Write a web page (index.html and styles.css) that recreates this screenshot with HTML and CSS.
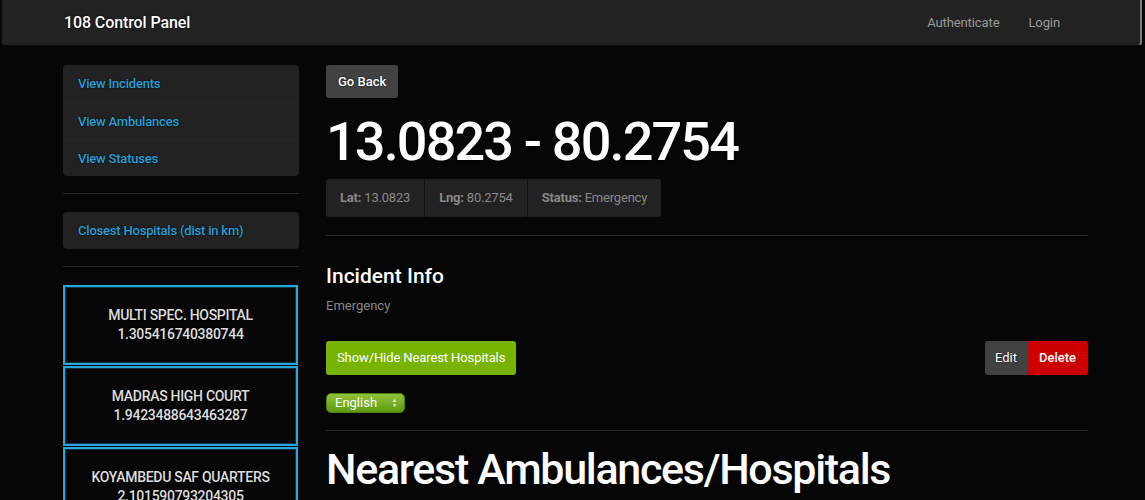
FILE: index.html
```html
<!DOCTYPE html>
<html>
<head>
<meta charset="utf-8">
<title>108 Control Panel</title>
<link rel="stylesheet" href="styles.css">
</head>
<body>
<nav class="navbar">
  <a class="brand" href="#">108 Control Panel</a>
  <div class="nav-links">
    <a href="#">Authenticate</a>
    <a href="#">Login</a>
  </div>
</nav>
<div class="page">
  <aside class="sidebar">
    <div class="list-group">
      <a class="list-item" href="#">View Incidents</a>
      <a class="list-item" href="#">View Ambulances</a>
      <a class="list-item" href="#">View Statuses</a>
    </div>
    <hr class="rule side-rule">
    <div class="list-group">
      <a class="list-item" href="#">Closest Hospitals (dist in km)</a>
    </div>
    <hr class="rule side-rule">
    <div class="hospital">MULTI SPEC. HOSPITAL<br>1.305416740380744</div>
    <div class="hospital">MADRAS HIGH COURT<br>1.9423488643463287</div>
    <div class="hospital">KOYAMBEDU SAF QUARTERS<br>2.101590793204305</div>
  </aside>
  <main class="main">
    <div><a class="btn btn-default" href="#">Go Back</a></div>
    <h1 class="title">13.0823 - 80.2754</h1>
    <div class="stats">
      <span class="stat"><b>Lat:</b> 13.0823</span>
      <span class="stat"><b>Lng:</b> 80.2754</span>
      <span class="stat"><b>Status:</b> Emergency</span>
    </div>
    <hr class="rule main-rule">
    <h5 class="section">Incident Info</h5>
    <p class="muted">Emergency</p>
    <div class="actions">
      <a class="btn btn-success" href="#">Show/Hide Nearest Hospitals</a>
      <div class="edit-group">
        <a class="btn btn-default" href="#">Edit</a><a class="btn btn-danger" href="#">Delete</a>
      </div>
    </div>
    <div class="lang-select">English<span class="arrows">&#9650;<br>&#9660;</span></div>
    <hr class="rule lang-rule">
    <h2 class="big">Nearest Ambulances/Hospitals</h2>
  </main>
</div>
</body>
</html>
```
FILE: styles.css
```css
html, body {
  margin: 0;
  padding: 0;
  background: #060606;
  height: 500px;
  overflow: hidden;
}
body {
  font-family: Roboto, "Liberation Sans", Arial, sans-serif;
  font-size: 14px;
  line-height: 20px;
  color: #888;
}
a { text-decoration: none; }

.navbar {
  box-sizing: border-box;
  height: 46px;
  margin: 0 3px 0 1px;
  background: #222;
  border: 1px solid #0a0a0a;
  border-top: none;
  border-radius: 0 0 4px 4px;
  border-right: 2px solid #7a7a7a;
  display: flex;
  align-items: center;
  justify-content: space-between;
  padding: 0 80px 0 62px;
}
.brand {
  color: #fff;
  font-size: 16px;
  font-weight: 500;
  letter-spacing: -0.1px;
  text-shadow: 0 0 2px #000;
}
.nav-links { display: flex; gap: 29px; }
.nav-links a { color: #999; font-size: 13px; letter-spacing: -0.1px; }

.page {
  display: grid;
  grid-template-columns: 236px 762px;
  column-gap: 27px;
  padding: 19px 0 0 63px;
}

.list-group {
  background: #222;
  border-radius: 4px;
  overflow: hidden;
}
.list-item {
  display: block;
  height: 37px;
  box-sizing: border-box;
  padding: 9px 15px 0;
  color: #2a9fd6;
  font-size: 13px;
  font-weight: 500;
  letter-spacing: -0.2px;
  border-top: 1px solid #262626;
  text-shadow: 0 0 2px #000;
}
.list-item:first-child { border-top: none; }

.rule {
  border: 0;
  border-top: 1px solid #282828;
  margin: 0;
}
.side-rule { margin: 17px 0 18px; }

.hospital {
  width: 235px;
  box-sizing: border-box;
  border: 2px solid #27a6d8;
  box-shadow: inset 0 0 0 1px #0e3545;
  padding: 19px 4px;
  margin-bottom: 1px;
  text-align: center;
  color: #ddd;
  font-size: 14px;
  line-height: 19px;
  font-weight: 500;
  letter-spacing: -0.3px;
  text-shadow: 0 0 2px #000;
}

.main { min-width: 0; }
.btn {
  display: inline-block;
  box-sizing: border-box;
  height: 33px;
  padding: 0 12px;
  line-height: 33px;
  font-size: 13px;
  font-weight: 500;
  color: #fff;
  border-radius: 3px;
  text-shadow: 0 0 2px rgba(0,0,0,.8);
}
.btn-default { background: #424242; }
.btn-success { background: #77b300; height: 34px; line-height: 34px; padding: 0 11px; text-shadow: none; font-weight: 400; letter-spacing: -0.1px; }
.btn-danger { background: #c00; height: 34px; line-height: 34px; border-radius: 0 3px 3px 0; text-shadow: none; padding: 0 12px; }
.edit-group .btn-default { height: 34px; line-height: 34px; border-radius: 3px 0 0 3px; padding: 0 10px; font-weight: 400; }

.title {
  margin: 14px 0 0 0;
  color: #fff;
  font-size: 54px;
  line-height: 60px;
  font-weight: 500;
  letter-spacing: -1.85px;
  text-shadow: 0 0 3px #000;
}
.stats {
  display: inline-flex;
  margin-top: 7px;
  gap: 1px;
  background: #111;
  border-radius: 3px;
  overflow: hidden;
}
.stat {
  background: #222;
  height: 38px;
  line-height: 38px;
  padding: 0 14px;
  font-size: 13px;
  letter-spacing: -0.2px;
  color: #888;
}
.stat b { font-weight: 700; }

.main-rule { margin: 18px 0 0; }

.section {
  margin: 28px 0 0;
  color: #fff;
  font-size: 21px;
  line-height: 24px;
  font-weight: 500;
  text-shadow: 0 0 2px #000;
}
.muted {
  margin: 8px 0 0;
  font-size: 13px;
  color: #888;
}
.actions {
  display: flex;
  justify-content: space-between;
  align-items: center;
  margin-top: 25px;
}
.edit-group { display: flex; }

.lang-select {
  margin-top: 18px;
  width: 79px;
  height: 20px;
  box-sizing: border-box;
  border-radius: 5px;
  background: linear-gradient(#8fc43a, #5e9a10);
  border: 1px solid #4d7d0a;
  color: #fff;
  font-size: 13px;
  line-height: 18px;
  padding: 0 0 0 8px;
  display: flex;
  justify-content: space-between;
  align-items: center;
}
.arrows {
  font-size: 5px;
  line-height: 5px;
  margin-right: 7px;
  text-align: center;
}
.lang-rule { margin: 17px 0 0; }

.big {
  margin: 13px 0 0;
  color: #fff;
  font-size: 43px;
  line-height: 50px;
  font-weight: 500;
  letter-spacing: -1.3px;
  text-shadow: 0 0 3px #000;
}
```
